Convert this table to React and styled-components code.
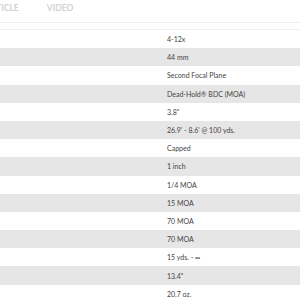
import React from "react";
import styled, { createGlobalStyle } from "styled-components";

const GlobalStyle = createGlobalStyle`
  html, body {
    margin: 0;
    padding: 0;
    background: #fff;
    overflow: hidden;
  }
  body {
    font-family: Lato, "Liberation Sans", sans-serif;
  }
`;

const specs = [
  "4-12x",
  "44 mm",
  "Second Focal Plane",
  "Dead-Hold® BDC (MOA)",
  "3.8\"",
  "26.9' - 8.6' @ 100 yds.",
  "Capped",
  "1 inch",
  "1/4 MOA",
  "15 MOA",
  "70 MOA",
  "70 MOA",
  "15 yds. - ∞",
  "13.4\"",
  "20.7 oz.",
];

const App = () => {
  return (
    <Page>
      <GlobalStyle />
      <Tabs>
        <Tab>Article</Tab>
        <Tab>Video</Tab>
      </Tabs>
      <Table>
        {specs.map((value, index) => (
          <Row key={index} $striped={index % 2 === 1}>
            <Label />
            <Value>{value}</Value>
          </Row>
        ))}
      </Table>
    </Page>
  );
};

export default App;

const Page = styled.div`
  width: 300px;
  height: 300px;
  overflow: hidden;
`;

const Tabs = styled.div`
  display: flex;
  align-items: center;
  gap: 28px;
  height: 21px;
  margin-left: -15px;
  padding-bottom: 1px;
  border-bottom: 1px solid #ececec;
`;

const Tab = styled.div`
  font-family: Lato, "Liberation Sans", sans-serif;
  font-weight: 700;
  font-size: 8.5px;
  text-transform: uppercase;
  color: #d2d2d2;
  padding-bottom: 5px;
`;

const Table = styled.div`
  margin-top: 6px;
  border-top: 1px solid #f1f1f1;
`;

const Row = styled.div`
  display: grid;
  grid-template-columns: 162px 1fr;
  align-items: center;
  height: 18.2px;
  background: ${(p) => (p.$striped ? "#e6e6e6" : "#fff")};
`;

const Label = styled.div``;

const Value = styled.div`
  padding-left: 5px;
  font-size: 7px;
  color: #444;
  white-space: nowrap;
`;
